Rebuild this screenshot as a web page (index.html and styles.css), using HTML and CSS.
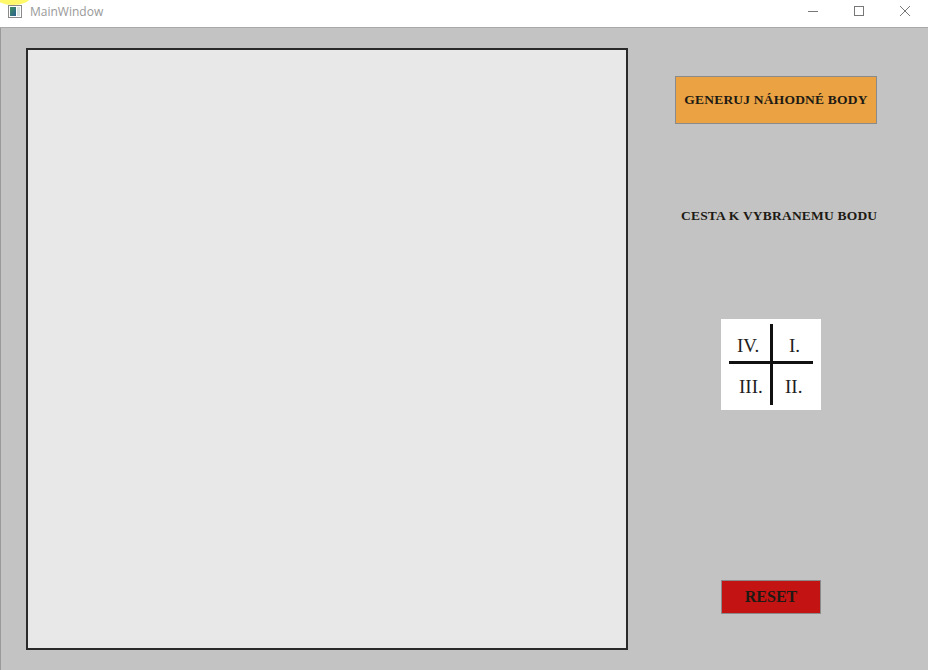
FILE: index.html
```html
<!DOCTYPE html>
<html>
<head>
<meta charset="utf-8">
<link rel="stylesheet" href="styles.css">
</head>
<body>
<div class="window">
  <div class="titlebar">
    <div class="blob"></div>
    <svg class="appicon" width="14" height="13" viewBox="0 0 14 13">
      <rect x="0.5" y="0.5" width="13" height="12" fill="#fff" stroke="#8a8a8a"/>
      <defs><linearGradient id="g" x1="0" y1="0" x2="1" y2="1"><stop offset="0" stop-color="#3f8f5f"/><stop offset="1" stop-color="#2a6090"/></linearGradient></defs>
      <rect x="2" y="2" width="6" height="9" fill="url(#g)"/>
      <rect x="9" y="2" width="3" height="9" fill="#d8e4e0"/>
    </svg>
    <span class="title">MainWindow</span>
    <div class="controls">
      <svg width="46" height="26" viewBox="0 0 46 26"><line x1="18" y1="11.5" x2="28" y2="11.5" stroke="#777" stroke-width="1"/></svg>
      <svg width="46" height="26" viewBox="0 0 46 26"><rect x="18.5" y="6.5" width="9" height="9" fill="none" stroke="#777" stroke-width="1"/></svg>
      <svg width="46" height="26" viewBox="0 0 46 26"><path d="M18 6 L28 16 M28 6 L18 16" stroke="#777" stroke-width="1"/></svg>
    </div>
  </div>
  <div class="content">
    <div class="canvas"></div>
    <div class="side">
      <button class="btn gen">GENERUJ NÁHODNÉ BODY</button>
      <div class="label">CESTA K VYBRANEMU BODU</div>
      <div class="quad">
        <div class="vline"></div>
        <div class="hline"></div>
        <span class="q q4">IV.</span>
        <span class="q q1">I.</span>
        <span class="q q3">III.</span>
        <span class="q q2">II.</span>
      </div>
      <button class="btn reset">RESET</button>
    </div>
  </div>
</div>
</body>
</html>
```
FILE: styles.css
```css
html, body { margin: 0; padding: 0; }
body { width: 928px; height: 670px; overflow: hidden; background: #c3c3c3; }
.window { width: 928px; height: 670px; display: flex; flex-direction: column; }
.titlebar {
  position: relative;
  height: 27px;
  background: #fff;
  border-bottom: 1px solid #a9a9a9;
  display: flex;
  align-items: center;
  font-family: "Open Sans", "Noto Sans", sans-serif;
}
.blob {
  position: absolute; left: -4px; top: -10px; width: 34px; height: 15px;
  background: #fff86a; border-radius: 50%;
}
.appicon { margin-left: 8px; margin-top: -4px; position: relative; }
.title { margin-left: 8px; margin-top: -4px; font-size: 12px; color: #999; }
.controls { margin-left: auto; display: flex; align-self: flex-start; }
.controls svg { display: block; }
.content {
  flex: 1;
  display: flex;
  border-left: 1px solid #9a9a9a;
  background: #c3c3c3;
}
.canvas {
  margin: 20px 0 0 25px;
  width: 598px; height: 598px;
  border: 2px solid #2a2a2a;
  background: #e8e8e8;
}
.side { display: flex; flex-direction: column; align-items: flex-start; }
.btn {
  font-family: "Liberation Serif", "DejaVu Serif", serif;
  font-weight: bold;
  color: #1e1a14;
  padding: 0;
  box-sizing: border-box;
  border: 1px solid #8a8a8a;
}
.gen {
  margin: 48px 0 0 47px;
  width: 202px; height: 48px;
  background: #eaa242;
  font-size: 13.5px;
  letter-spacing: 0.2px;
}
.label {
  margin: 84px 0 0 53px;
  font-family: "Liberation Serif", "DejaVu Serif", serif;
  font-weight: bold;
  font-size: 13.5px;
  letter-spacing: 0.2px;
  color: #1e1a14;
}
.quad {
  position: relative;
  margin: 95px 0 0 93px;
  width: 100px; height: 91px;
  background: #fff;
  font-family: "Liberation Serif", "DejaVu Serif", serif;
  font-size: 19px;
  color: #1e1e1e;
}
.vline { position: absolute; left: 49px; top: 5px; width: 3px; height: 81px; background: #111; }
.hline { position: absolute; left: 8px; top: 42px; width: 84px; height: 3px; background: #111; }
.q { position: absolute; line-height: 1; }
.q4 { left: 16px; top: 17px; }
.q1 { left: 68px; top: 17px; }
.q3 { left: 18px; top: 58px; }
.q2 { left: 64px; top: 58px; }
.reset {
  margin: 170px 0 0 93px;
  width: 100px; height: 34px;
  background: #c41313;
  font-size: 16px;
}
```
